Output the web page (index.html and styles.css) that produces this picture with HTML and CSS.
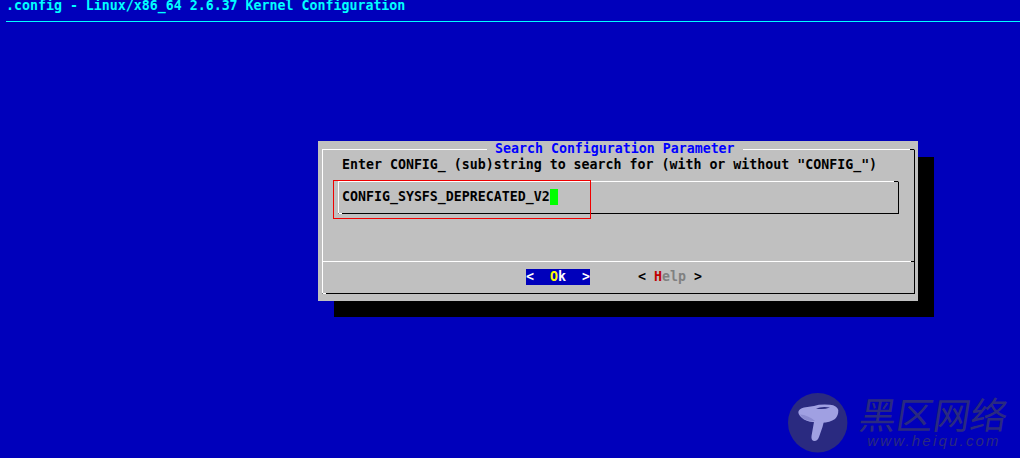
FILE: index.html
```html
<!DOCTYPE html>
<html lang="en">
<head>
<meta charset="utf-8">
<title>.config - Linux/x86_64 2.6.37 Kernel Configuration</title>
<link rel="stylesheet" href="styles.css">
</head>
<body>
<header class="topbar">
  <div class="topbar-title">.config - Linux/x86_64 2.6.37 Kernel Configuration</div>
  <div class="topbar-rule"></div>
</header>

<section class="dialog">
  <div class="frame">
    <h1 class="dialog-title">Search Configuration Parameter</h1>
    <p class="prompt">Enter CONFIG_ (sub)string to search for (with or without "CONFIG_")</p>
    <div class="inputbox"><span class="inputtext">CONFIG_SYSFS_DEPRECATED_V2</span><span class="cursor"></span></div>
    <div class="buttons">
      <span class="btn btn-active"><span class="bracket">&lt;</span><span class="hot">O</span><span class="rest">k</span><span class="bracket">&gt;</span></span>
      <span class="btn"><span class="bracket">&lt;</span><span class="hot-red">H</span><span class="rest-gray">elp</span><span class="bracket">&gt;</span></span>
    </div>
  </div>
  <div class="annotation"></div>
</section>

<aside class="watermark">
  <svg class="wm-logo" width="60" height="60" viewBox="0 0 60 60" aria-hidden="true">
    <circle cx="29.700" cy="29.700" r="29.700" fill="#2a2a80"/>
    <path d="M26.500 26 L23.500 43 Q23 47.500 26 48 Q29.500 48.300 31 44 L34.500 34 L36.500 26 Z" fill="#a0a0e2"/>
    <path d="M10.300 19 Q11 15.500 16 14.500 L26 13 Q32 11 42 11.800 Q49 12.500 50.300 17 Q50.500 22.500 47 26 Q42 29.500 33.700 29.700 L22 28.700 Q15 27 12 23 Q10.300 21 10.300 19 Z" fill="#a0a0e2"/>
    <path d="M28 15.500 Q34 13 42 14.500 Q35 17 28 15.500 Z" fill="#2a2a80"/>
    <path d="M12 21.500 Q20 22 27 28 Q20 28.500 15 25.500 Z" fill="#8a8ad0"/>
  </svg>
  <div class="wm-text">
    <div class="wm-cn">黑区网络</div>
    <div class="wm-url">www.heiqu.com</div>
  </div>
</aside>
</body>
</html>
```
FILE: styles.css
```css
* { box-sizing: border-box; }

html, body {
  margin: 0;
  padding: 0;
  height: 458px;
  overflow: hidden;
}

body {
  position: relative;
  background: #0000bb;
  color: #000;
  font-family: "DejaVu Sans Mono", "Liberation Mono", monospace;
  font-weight: bold;
  font-size: 13.28px;
  line-height: 16px;
  white-space: nowrap;
}

.topbar {
  padding-left: 6px;
  position: relative;
  top: -3px;
}

.topbar-title {
  height: 16px;
  padding-top: 1px;
  color: #00ffff;
}

.topbar-rule {
  margin-top: 8px;
  height: 1px;
  background: #00ffff;
}

.dialog {
  position: absolute;
  left: 318px;
  top: 141px;
  width: 600px;
  height: 160px;
  padding: 8px 3px 7px 4px;
  background: #c0c0c0;
  box-shadow: 16px 16px 0 #000;
}

.frame {
  position: relative;
  height: 145px;
  padding-top: 7px;
  border-top: 1px solid #fff;
  border-left: 1px solid #fff;
  border-right: 1px solid #000;
  border-bottom: 1px solid #000;
}

.frame::before,
.inputbox::before {
  content: "";
  position: absolute;
  left: 0;
  bottom: -1px;
  width: 3px;
  height: 1px;
  background: #fff;
}

.frame::after {
  content: "";
  position: absolute;
  top: -1px;
  right: 0;
  width: 4px;
  height: 1px;
  background: #000;
}

.dialog-title {
  position: absolute;
  top: -9px;
  left: 164px;
  margin: 0;
  padding: 0 8px;
  background: #c0c0c0;
  color: #0000ff;
  font: inherit;
}

.prompt {
  margin: 0 0 0 19px;
  height: 16px;
}

.inputbox {
  position: relative;
  display: flex;
  height: 33px;
  margin: 8px 15px 0 15px;
  padding: 7px 0 0 3px;
  border-top: 1px solid #fff;
  border-left: 1px solid #fff;
  border-right: 1px solid #000;
  border-bottom: 1px solid #000;
}

.inputbox::after {
  content: "";
  position: absolute;
  top: -1px;
  right: 0;
  width: 4px;
  height: 1px;
  background: #000;
}

.cursor {
  width: 8px;
  height: 16px;
  background: #00ff00;
}

.buttons {
  position: relative;
  display: flex;
  gap: 48px;
  height: 32px;
  margin-top: 47px;
  padding: 7px 0 0 203px;
  border-top: 1px solid #fff;
}

.buttons::after {
  content: "";
  position: absolute;
  top: -1px;
  right: 0;
  width: 3px;
  height: 1px;
  background: #000;
}

.btn {
  display: flex;
  width: 64px;
  height: 16px;
}

.bracket { width: 8px; }

.btn-active {
  background: #0000bb;
  color: #fff;
}

.hot {
  margin-left: 16px;
  color: #ffff00;
}

.rest {
  margin-right: 16px;
  color: #fff;
}

.hot-red {
  margin-left: 8px;
  color: #c00000;
}

.rest-gray {
  margin-right: 8px;
  color: #808080;
}

.annotation {
  position: absolute;
  left: 15px;
  top: 39px;
  width: 258px;
  height: 39px;
  border: 1px solid #f00000;
}

.watermark {
  position: absolute;
  left: 788px;
  top: 393px;
  display: flex;
  gap: 12px;
  color: #2a2a80;
}

.wm-logo { flex: none; }

.wm-text {
  display: flex;
  flex-direction: column;
  align-items: center;
  padding-top: 2px;
}

.wm-cn {
  font-family: "Noto Sans CJK SC", sans-serif;
  font-weight: 400;
  font-size: 37px;
  line-height: 37px;
  transform: skewX(-9deg);
}

.wm-url {
  margin-top: 2px;
  font-family: "Liberation Sans", sans-serif;
  font-weight: 400;
  font-style: italic;
  font-size: 15px;
  line-height: 14px;
  letter-spacing: 2.2px;
}
```
